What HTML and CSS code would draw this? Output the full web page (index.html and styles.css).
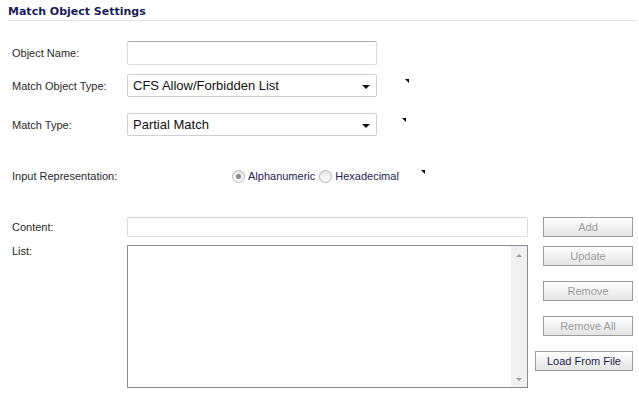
FILE: index.html
```html
<!DOCTYPE html>
<html lang="en">
<head>
    <meta charset="UTF-8">
    <title>Match Object Settings</title>
    <link rel="stylesheet" href="styles.css">
</head>
<body>
    <h2 class="section-title">Match Object Settings</h2>
    <div class="form">
        <div class="row row-name">
            <label class="label">Object Name:</label>
            <input class="text-input name-input" type="text">
        </div>
        <div class="row row-type">
            <label class="label">Match Object Type:</label>
            <div class="select">
                <span class="select-text">CFS Allow/Forbidden List</span>
                <span class="select-arrow"></span>
            </div>
            <span class="marker marker-type"></span>
        </div>
        <div class="row row-match">
            <label class="label">Match Type:</label>
            <div class="select">
                <span class="select-text">Partial Match</span>
                <span class="select-arrow"></span>
            </div>
            <span class="marker marker-match"></span>
        </div>
        <div class="row row-repr">
            <label class="label">Input Representation:</label>
            <div class="radios">
                <span class="radio checked"></span>
                <span class="radio-label">Alphanumeric</span>
                <span class="radio"></span>
                <span class="radio-label">Hexadecimal</span>
            </div>
            <span class="marker marker-repr"></span>
        </div>
        <div class="row row-content">
            <label class="label">Content:</label>
            <input class="text-input content-input" type="text">
            <div class="buttons">
                <button class="btn btn-add" disabled>Add</button>
            </div>
        </div>
        <div class="row row-list">
            <label class="label label-top">List:</label>
            <div class="list-box">
                <div class="list-items"></div>
                <div class="scrollbar">
                    <span class="arrow-up"></span>
                    <span class="arrow-down"></span>
                </div>
            </div>
            <div class="buttons buttons-stack">
                <button class="btn" disabled>Update</button>
                <button class="btn" disabled>Remove</button>
                <button class="btn" disabled>Remove All</button>
                <button class="btn btn-load">Load From File</button>
            </div>
        </div>
    </div>
</body>
</html>
```

FILE: styles.css
```css
body {
    margin: 0;
    width: 639px;
    background: #fff;
    font-family: "Liberation Sans", Arial, sans-serif;
    font-size: 11px;
    color: #2a2a2a;
}

.section-title {
    margin: 0 1px 0 8px;
    padding: 5px 0 1px;
    font-family: "DejaVu Sans", Verdana, sans-serif;
    font-size: 11px;
    line-height: 14px;
    font-weight: bold;
    color: #1b1d5a;
    border-bottom: 1px solid #e2e2e2;
}

.form {
    padding-left: 12px;
}

.row {
    display: flex;
    align-items: center;
}

.label {
    width: 115px;
    flex: none;
}

.label-top {
    align-self: flex-start;
    padding-top: 0;
}

.row-name { margin-top: 20px; }
.row-type { margin-top: 9px; }
.row-match { margin-top: 16px; }
.row-repr { margin-top: 31px; height: 18px; }
.row-content { margin-top: 32px; }
.row-list { margin-top: 8px; align-items: flex-start; }

.text-input {
    box-sizing: border-box;
    margin: 0;
    padding: 0 5px;
    border: 1px solid #dcdcdc;
    border-top-color: #ababab;
    border-radius: 2px;
    background: #fff;
    outline: none;
}

.name-input {
    width: 250px;
    height: 24px;
}

.content-input {
    width: 401px;
    height: 20px;
    border-top-color: #d2d2d2;
}

.select {
    position: relative;
    box-sizing: border-box;
    width: 250px;
    height: 23px;
    padding-left: 5px;
    display: flex;
    align-items: center;
    border: 1px solid #d0d0d0;
    border-radius: 2px;
    font-size: 13px;
    color: #111;
}

.select-arrow {
    position: absolute;
    right: 6px;
    top: 10px;
    width: 0;
    height: 0;
    border-left: 4px solid transparent;
    border-right: 4px solid transparent;
    border-top: 4px solid #111;
}

.marker {
    align-self: flex-start;
    width: 0;
    height: 0;
    border-top: 4px solid #000;
    border-left: 4px solid transparent;
}

.marker-type { margin: 5px 0 0 28px; }
.marker-match { margin: 5px 0 0 25px; }
.marker-repr { margin: 3px 0 0 18px; }

.radios {
    display: flex;
    align-items: center;
    margin-left: 105px;
    color: #1d2350;
}

.radio {
    box-sizing: border-box;
    width: 13px;
    height: 13px;
    border-radius: 50%;
    border: 1px solid #b4b4b4;
    background: linear-gradient(#e8e8e8, #fdfdfd);
    display: flex;
    align-items: center;
    justify-content: center;
}

.radio.checked::after {
    content: "";
    width: 5px;
    height: 5px;
    border-radius: 50%;
    background: #8a8a8a;
}

.radio-label {
    margin: 0 4px 0 3px;
}

.buttons {
    width: 105px;
    flex: none;
    display: flex;
    flex-direction: column;
    align-items: flex-end;
}

.buttons-stack {
    padding-top: 1px;
    gap: 15px;
}

.btn {
    box-sizing: border-box;
    width: 90px;
    height: 20px;
    margin: 0;
    padding: 0;
    border: 1px solid #9c9c9c;
    background: linear-gradient(#ffffff, #e4e4e4);
    font-family: "Liberation Sans", Arial, sans-serif;
    font-size: 11px;
    color: #9d9d9d;
}

.btn-load {
    width: 98px;
    color: #1b1d4a;
}

.list-box {
    box-sizing: border-box;
    width: 401px;
    height: 143px;
    display: flex;
    border: 1px solid #878b94;
    background: #fff;
}

.list-items {
    flex: 1;
}

.scrollbar {
    width: 16px;
    display: flex;
    flex-direction: column;
    justify-content: space-between;
    align-items: center;
    padding: 8px 0 6px;
    background: #f0f0f0;
}

.arrow-up,
.arrow-down {
    width: 0;
    height: 0;
    border-left: 3px solid transparent;
    border-right: 3px solid transparent;
}

.arrow-up { border-bottom: 3px solid #9a9a9a; }
.arrow-down { border-top: 3px solid #9a9a9a; }
```
